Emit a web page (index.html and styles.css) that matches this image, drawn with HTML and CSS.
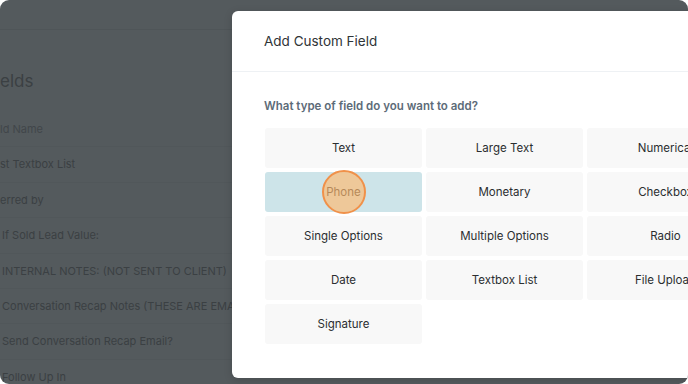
FILE: index.html
```html
<!DOCTYPE html>
<html>
    <head>
        <meta charset="utf-8">
        <title>Add Custom Field</title>
        <meta name="viewport" content="width=device-width, initial-scale=1">
        <link rel="stylesheet" href="styles.css">
    </head>
    <body>
        <div class="frame">
            <div class="page">
                <div class="topbar"></div>
                <h2 class="pageTitle">elds</h2>
                <ul class="fieldList">
                    <li class="head">ld Name</li>
                    <li>st Textbox List</li>
                    <li>erred by</li>
                    <li class="inset">If Sold Lead Value:</li>
                    <li class="inset">INTERNAL NOTES: (NOT SENT TO CLIENT)</li>
                    <li class="inset">Conversation Recap Notes (THESE ARE EMAILED TO CLIENT)</li>
                    <li class="inset">Send Conversation Recap Email?</li>
                    <li class="inset">Follow Up In</li>
                </ul>
            </div>

            <div class="modal">
                <div class="modalHeader">Add Custom Field</div>
                <div class="modalBody">
                    <h4 class="question">What type of field do you want to add?</h4>
                    <div class="types">
                        <div class="type">Text</div>
                        <div class="type">Large Text</div>
                        <div class="type">Numerical</div>
                        <div class="type active">Phone<span class="click"></span></div>
                        <div class="type">Monetary</div>
                        <div class="type">Checkbox</div>
                        <div class="type">Single Options</div>
                        <div class="type">Multiple Options</div>
                        <div class="type">Radio</div>
                        <div class="type">Date</div>
                        <div class="type">Textbox List</div>
                        <div class="type">File Upload</div>
                        <div class="type">Signature</div>
                    </div>
                </div>
            </div>
        </div>
    </body>
</html>
```

FILE: styles.css
```css
* {
    box-sizing: border-box;
}
body {
    margin: 0;
    background: #fff;
    font-family: "Inter", "Liberation Sans", sans-serif;
}
.frame {
    position: relative;
    width: 688px;
    height: 384px;
    border-radius: 9px;
    background: #545a5d;
    overflow: hidden;
}

/* dimmed page behind the modal */
.page {
    color: #3b4043;
}
.topbar {
    height: 30px;
    border-bottom: 1px solid #4f5558;
}
.pageTitle {
    margin: 40px 0 0;
    font-size: 17px;
    font-weight: 400;
    line-height: 22px;
}
.fieldList {
    list-style: none;
    margin: 20px 0 0;
    padding: 0;
}
.fieldList li {
    height: 35.4px;
    line-height: 34px;
    font-size: 11px;
    white-space: nowrap;
    border-bottom: 1px solid #51575a;
}
.fieldList li.head {
    color: #41464a;
}
.fieldList li.inset {
    padding-left: 2px;
}

/* modal */
.modal {
    position: absolute;
    left: 232px;
    top: 11px;
    width: 545px;
    height: 367px;
    background: #fff;
    border-radius: 6px;
    box-shadow: 0 2px 8px rgba(0,0,0,.15);
}
.modalHeader {
    height: 61px;
    padding: 0 32px;
    line-height: 60px;
    font-size: 13.5px;
    color: #2f3437;
    border-bottom: 1px solid #eef1f4;
}
.modalBody {
    padding: 26px 33px 0;
}
.question {
    margin: 0 0 14px -1px;
    font-size: 11.5px;
    line-height: 16px;
    font-weight: 600;
    color: #5d6b78;
}
.types {
    display: grid;
    grid-template-columns: repeat(3, 157px);
    grid-auto-rows: 40px;
    gap: 4px;
}
.type {
    position: relative;
    display: flex;
    align-items: center;
    justify-content: center;
    background: #f8f8f8;
    border-radius: 3px;
    font-size: 11.5px;
    color: #2b2e30;
    white-space: nowrap;
}
.type.active {
    background: #cde4e9;
}
.click {
    position: absolute;
    left: 57px;
    top: -2px;
    width: 44px;
    height: 44px;
    border-radius: 50%;
    border: 2px solid #f0914a;
    background: rgba(255,185,110,0.65);
}
```
